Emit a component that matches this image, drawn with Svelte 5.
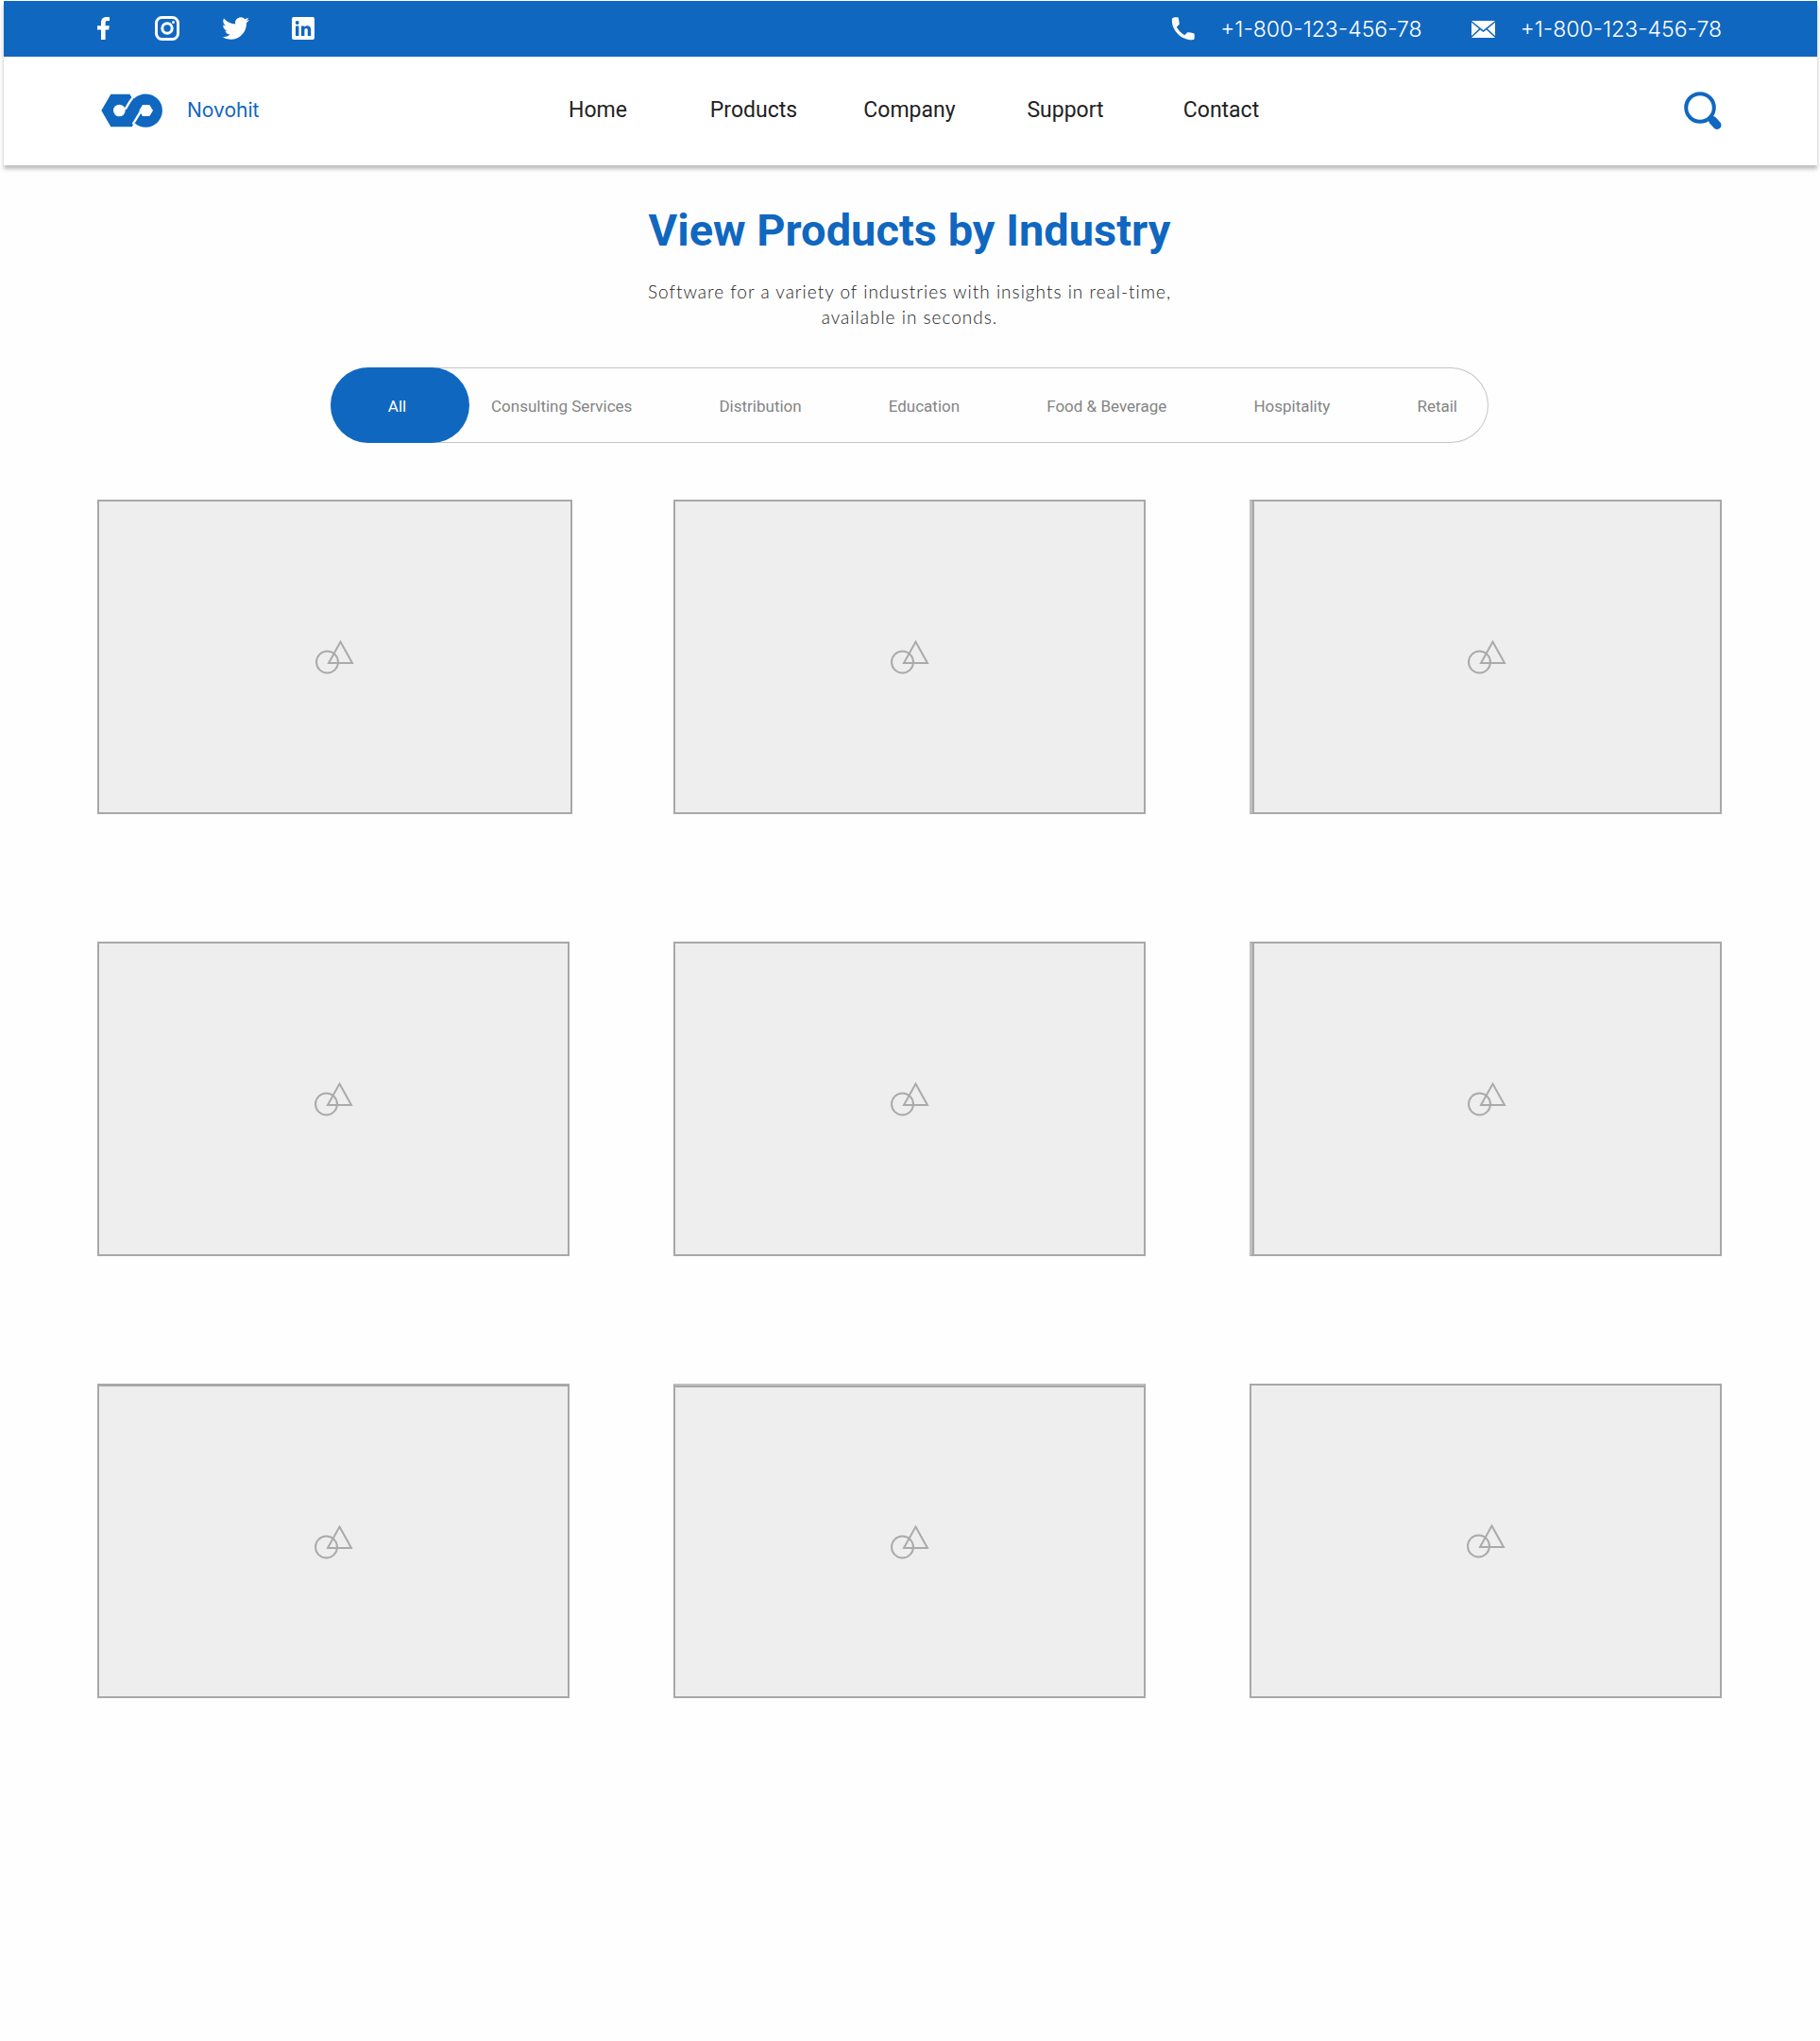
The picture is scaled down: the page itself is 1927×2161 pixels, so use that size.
<script>
  const nav = ['Home', 'Products', 'Company', 'Support', 'Contact'];
  const filters = ['Consulting Services', 'Distribution', 'Education', 'Food & Beverage', 'Hospitality', 'Retail'];
  const cards = ['wide', '', 'edge-left', '', '', 'edge-left', 'edge-soft', 'edge-top', ''];
</script>

<div class="page">
  <header>
    <div class="topbar">
      <div class="social">
        <a href="#facebook" aria-label="Facebook">
          <svg class="fb" viewBox="0 0 13 24"><path d="M4 24V13.600H0V9.300H4V6C4 2 6.400 0 9.800 0c1.400 0 2.700.1 3.200.2v3.900h-2.300c-1.700 0-2.100.8-2.100 2.100v3.100h4.200l-.6 4.300H8.600V24z" /></svg>
        </a>
        <a href="#instagram" aria-label="Instagram">
          <svg class="ig" viewBox="0 0 26 26"><rect x="1.500" y="1.500" width="23" height="23" rx="6" /><circle cx="13" cy="13" r="5.200" /><circle class="dot" cx="19.500" cy="6.500" r="1.500" /></svg>
        </a>
        <a href="#twitter" aria-label="Twitter">
          <svg class="tw" viewBox="0 2 24 20"><path d="M23.950 4.570a10 10 0 0 1-2.820.77 4.960 4.960 0 0 0 2.160-2.720c-.95.55-2 .95-3.130 1.180a4.920 4.920 0 0 0-8.380 4.480C7.690 8.090 4.070 6.130 1.640 3.160a4.820 4.820 0 0 0-.67 2.480c0 1.710.87 3.210 2.190 4.100a4.900 4.900 0 0 1-2.230-.62v.06a4.920 4.920 0 0 0 3.950 4.830 5 5 0 0 1-2.210.08 4.940 4.940 0 0 0 4.600 3.420A9.870 9.870 0 0 1 0 19.540a13.990 13.990 0 0 0 7.550 2.210c9.050 0 14-7.500 14-13.980 0-.21 0-.42-.02-.63a9.940 9.940 0 0 0 2.420-2.570z" /></svg>
        </a>
        <a href="#linkedin" aria-label="LinkedIn">
          <svg class="li" viewBox="0 0 24 24"><path fill-rule="evenodd" d="M2 0h20a2 2 0 0 1 2 2v20a2 2 0 0 1-2 2H2a2 2 0 0 1-2-2V2a2 2 0 0 1 2-2zM4 9.500V20h3.400V9.500zM5.700 4a2 2 0 1 0 0 4 2 2 0 0 0 0-4zM10 9.500V20h3.400v-5.700c0-1.300.7-2.200 1.800-2.200s1.600.8 1.600 2.200V20h3.400v-6.400c0-3-1.500-4.400-3.700-4.400-1.500 0-2.500.7-3.100 1.600V9.500z" /></svg>
        </a>
      </div>
      <div class="contacts">
        <a href="tel:+180012345678">
          <svg class="phone" viewBox="0 0 25 25"><path d="M1 1.500C2.500.2 5.500 0 7.500.6c.8 2.400 1.200 4.900 1.200 7.200L5.800 10.600c1.700 3.600 4.900 6.800 8.500 8.600l2.900-2.900c2.400 0 4.900.4 7.200 1.200.6 2 .4 5-.3 6.500C11.500 25.500-.5 14 1 1.500z" /></svg>
          <span>+1-800-123-456-78</span>
        </a>
        <a href="#mail">
          <svg class="mail" viewBox="0 0 25 18"><path d="M0 0h25L12.500 10zM0 1.800 8 8.600 0 16zM25 1.800V16l-8-7.400zM9.200 9.600l3.300 2.500 3.300-2.500L25 18H0z" /></svg>
          <span>+1-800-123-456-78</span>
        </a>
      </div>
    </div>
    <div class="navbar">
      <a class="brand" href="#home">
        <svg class="mark" viewBox="0 0 195 108" aria-hidden="true">
          <path class="solid" d="M1 54 31 2H91L99 15H106A53 53 0 1 1 108 95L104 96 98 106H31z" />
          <circle class="hole" cx="58" cy="54" r="19" />
          <path class="hole" d="M132 36h22l11 18-11 18h-22l-11-18z" />
          <path class="slit" d="M107 5 Q92 22 77 50M127 55 101 98" />
        </svg>
        <span>Novohit</span>
      </a>
      <nav>
        {#each nav as item}
          <a href="#{item.toLowerCase()}">{item}</a>
        {/each}
      </nav>
      <button class="search" aria-label="Search">
        <svg viewBox="0 0 40 40"><circle cx="17" cy="17" r="14.800" /><path d="M28 28 29 27" /><path class="handle" d="m30.500 30.500 4.500 5" /></svg>
      </button>
    </div>
  </header>

  <main>
    <h1>View Products by Industry</h1>
    <p>Software for a variety of industries with insights in real-time,<br />available in seconds.</p>
    <div class="filters">
      <button class="active">All</button>
      <div class="options">
        {#each filters as f}
          <button>{f}</button>
        {/each}
      </div>
    </div>
    <div class="grid">
      {#each cards as kind}
        <div class="card {kind}">
          <svg viewBox="0 0 41 37"><circle cx="12.500" cy="24" r="11.500" /><path d="M26.500 2.500 39 25H14z" /></svg>
        </div>
      {/each}
    </div>
  </main>
</div>

<style>
  :global(body) { background: #fefefe; }
  .page { padding: 1px 3px 0 4px; font-family: Roboto, 'Noto Sans', sans-serif; color: #222; }
  a { color: inherit; text-decoration: none; }
  button { font: inherit; color: inherit; border: 0; background: none; padding: 0; cursor: pointer; }
  svg { display: block; flex: none; }
  header { background: #fff; box-shadow: 0 4px 4px rgba(0, 0, 0, 0.25); }
  .topbar { display: flex; align-items: center; justify-content: space-between; height: 59px; padding: 0 101px 0 99px; box-sizing: border-box; background: #1067c0; color: #fff; }
  .social, .contacts { display: flex; align-items: center; }
  .social { gap: 45px; padding-bottom: 2px; }
  .social svg { fill: #fff; }
  .fb { width: 13px; height: 24px; }
  .social a:first-child { margin-right: 3px; }
  .ig { width: 26px; height: 26px; }
  .ig rect, .ig circle { fill: none; stroke: #fff; stroke-width: 3; }
  .ig .dot { fill: #fff; stroke: none; }
  .tw { width: 29px; height: 24px; }
  .li { width: 24px; height: 24px; }
  .contacts { gap: 52px; }
  .contacts a { display: flex; align-items: center; gap: 27px; font-family: Inter, sans-serif; font-size: 23px; font-weight: 300; line-height: 28px; }
  .contacts svg { fill: #fff; }
  .phone { width: 25px; height: 25px; }
  .mail { width: 25px; height: 18px; }
  .navbar { display: grid; grid-template-columns: 1fr auto 1fr; align-items: center; height: 115px; padding: 0 101px 2px 99px; box-sizing: border-box; }
  .brand { display: flex; align-items: center; gap: 26px; padding-left: 4px; color: #1067c0; font-family: Inter, sans-serif; font-size: 21px; line-height: 24px; }
  .mark { width: 65px; height: 36px; }
  .solid { fill: #1067c0; }
  .hole { fill: #fff; }
  .slit { fill: none; stroke: #fff; stroke-width: 7; }
  nav { display: grid; grid-template-columns: repeat(5, 165px); text-align: center; font-size: 23px; line-height: 28px; }
  .search { justify-self: end; }
  .search svg { width: 40px; height: 40px; fill: none; stroke: #1067c0; stroke-width: 4; stroke-linecap: round; }
  .search .handle { stroke-width: 9; }
  main { padding: 0 101px 64px 99px; text-align: center; }
  h1 { margin: 40px 0 0; color: #1067c0; font-size: 47px; line-height: 58px; font-weight: 700; }
  p { margin: 22px 0 0; font-family: Lato, sans-serif; font-size: 19px; font-weight: 300; line-height: 27px; letter-spacing: 1px; color: #222; }
  .filters { display: flex; width: 1226px; max-width: 100%; height: 80px; margin: 40px auto 0; box-sizing: border-box; border-radius: 40px; box-shadow: inset 0 0 0 1px #c4c4c4; font-size: 17px; line-height: 22px; }
  .filters button { padding-top: 2px; }
  .filters .active { width: 147px; padding-right: 6px; border-radius: 40px; background: #1067c0; color: #fff; }
  .options { flex: 1; display: flex; justify-content: space-between; padding: 0 33px 0 23px; color: #848484; }
  .grid { display: grid; grid-template-columns: repeat(3, 1fr); gap: 135px 110px; margin-top: 60px; }
  .card { display: flex; align-items: center; justify-content: center; height: 333px; box-sizing: border-box; border: 2px solid #a8a8a8; background: #eee; }
  .card svg { width: 41px; height: 37px; fill: none; stroke: #aaa; stroke-width: 2; }
  .wide { margin-right: -3px; }
  .edge-left { border-left: 3px solid #c0c0c0; padding-left: 2px; box-shadow: inset 2px 0 0 #a8a8a8; }
  .edge-top { border-top: 2px solid #c0c0c0; padding-top: 2px; box-shadow: inset 0 2px 0 #a8a8a8; }
  .edge-soft { border-top-width: 3px; }
</style>
